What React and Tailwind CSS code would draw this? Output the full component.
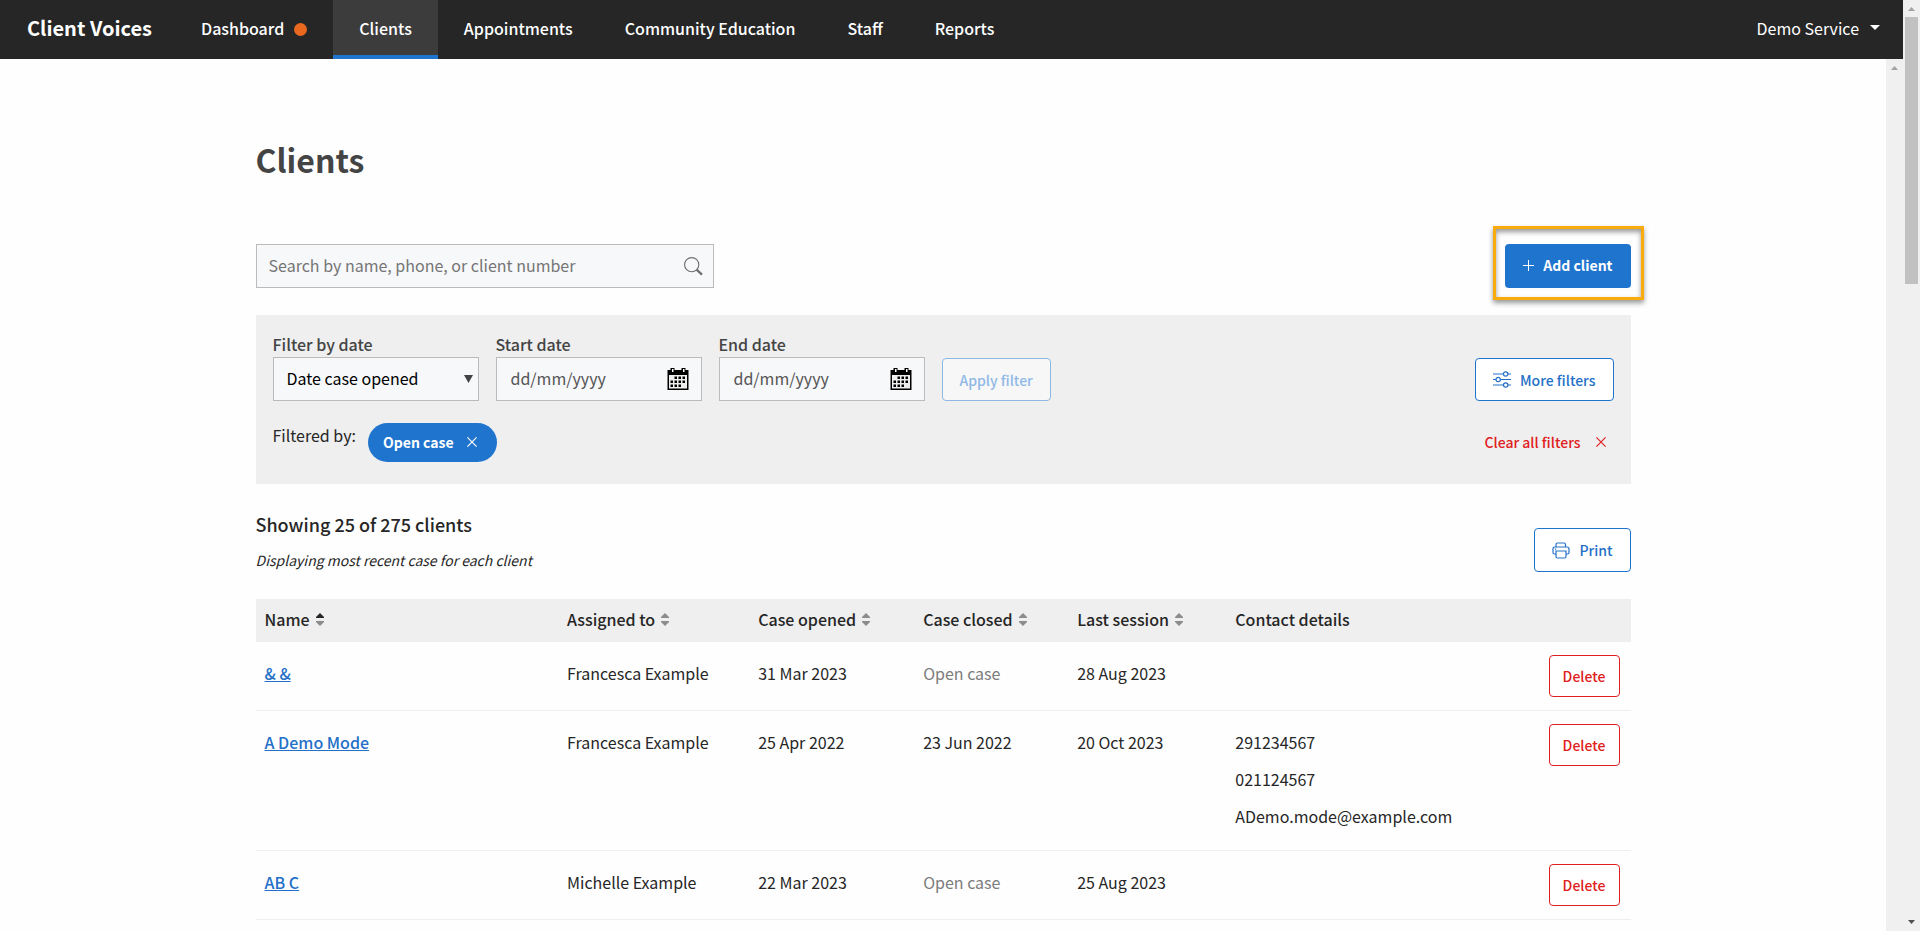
import React, { useState } from 'react';

const navItems = [
  { label: 'Dashboard', alert: true },
  { label: 'Clients' },
  { label: 'Appointments' },
  { label: 'Community Education' },
  { label: 'Staff' },
  { label: 'Reports' },
];

const columns = [
  { label: 'Name', sort: 'asc', width: 'w-[22%]' },
  { label: 'Assigned to', sort: 'none', width: 'w-[13.9%]' },
  { label: 'Case opened', sort: 'none', width: 'w-[12%]' },
  { label: 'Case closed', sort: 'none', width: 'w-[11.2%]' },
  { label: 'Last session', sort: 'none', width: 'w-[11.5%]' },
  { label: 'Contact details', width: 'w-[19%]' },
];

const clients = [
  { name: '& &', assigned: 'Francesca Example', opened: '31 Mar 2023', closed: null, last: '28 Aug 2023', contact: [] },
  {
    name: 'A Demo Mode',
    assigned: 'Francesca Example',
    opened: '25 Apr 2022',
    closed: '23 Jun 2022',
    last: '20 Oct 2023',
    contact: ['291234567', '021124567', 'ADemo.mode@example.com'],
  },
  { name: 'AB C', assigned: 'Michelle Example', opened: '22 Mar 2023', closed: null, last: '25 Aug 2023', contact: [] },
];

const SortIcon = ({ sort }) => (
  <svg width="8" height="13" viewBox="0 0 8 13" aria-hidden="true">
    <path d="M4 0 L8 4 V5 H0 V4 Z" fill={sort === 'asc' ? '#262626' : '#8c8c8c'} />
    <path d="M0 8 H8 V9 L4 13 L0 9 Z" fill="#8c8c8c" />
  </svg>
);

const CloseIcon = () => (
  <svg width="10" height="10" viewBox="0 0 10 10" fill="none" stroke="currentColor" strokeWidth="1.2" aria-hidden="true">
    <path d="M0.4 0.4 L9.6 9.6 M9.6 0.4 L0.4 9.6" />
  </svg>
);

const SearchIcon = () => (
  <svg width="19" height="19" viewBox="0 0 19 19" fill="none" stroke="#6e6e6e" aria-hidden="true">
    <circle cx="7.7" cy="7.7" r="7.1" strokeWidth="1.1" />
    <path d="M12.6 12.6 L18 17.6" strokeWidth="2.2" />
  </svg>
);

const CalendarIcon = () => (
  <svg width="22" height="22" viewBox="0 0 22 22" aria-hidden="true">
    <path d="M0.5 2 H21.5 V22 H0.5 Z" fill="#000" />
    <path d="M2 7 H20 V20.5 H2 Z" fill="#eee" />
    <path d="M3.5 0 H7.5 V5 H3.5 Z M14.5 0 H18.5 V5 H14.5 Z" fill="#000" />
    <path d="M5 1 H6.5 V4 H5 Z M16 1 H17.5 V4 H16 Z" fill="#fff" />
    <path
      d="M7.5 8.5h2.5v2.5h-2.5z M11.5 8.5h2.5v2.5h-2.5z M15.5 8.5h2.5v2.5h-2.5z M3.5 12.5h2.5v2.5h-2.5z M7.5 12.5h2.5v2.5h-2.5z M11.5 12.5h2.5v2.5h-2.5z M15.5 12.5h2.5v2.5h-2.5z M3.5 16.5h2.5v2.5h-2.5z M7.5 16.5h2.5v2.5h-2.5z M11.5 16.5h2.5v2.5h-2.5z"
      fill="#000"
    />
  </svg>
);

const SlidersIcon = () => (
  <svg width="18" height="17" viewBox="0 0 18 17" fill="none" stroke="currentColor" strokeWidth="1.2" aria-hidden="true">
    <path d="M0 3 H10.5 M15 3 H18 M0 8.5 H3 M7.5 8.5 H18 M0 14 H10.5 M15 14 H18" />
    <circle cx="12.7" cy="3" r="2.2" />
    <circle cx="5.2" cy="8.5" r="2.2" />
    <circle cx="12.7" cy="14" r="2.2" />
  </svg>
);

const PrintIcon = () => (
  <svg width="18" height="17" viewBox="0 0 18 17" fill="none" stroke="currentColor" strokeWidth="1.2" aria-hidden="true">
    <path d="M4 5 V2.5 Q4 1 5.5 1 H12 Q13.5 1 13.5 2.5 V5" />
    <path d="M4 12 H2.5 Q1 12 1 10.5 V7 Q1 5 3 5 H15 Q17 5 17 7 V10.5 Q17 12 15.5 12 H14" />
    <path d="M4 9 H14 V14.5 Q14 16 12.5 16 H5.5 Q4 16 4 14.5 Z" />
    <path d="M3 7.2 H4.2" />
  </svg>
);

const DateField = ({ id, label }) => (
  <div className="w-[206px]">
    <label htmlFor={id} className="block pb-0.5 leading-[22px] font-medium text-[#444]">{label}</label>
    <div className="flex h-11 items-center border border-[#bbb] bg-[#f7f8fa] pr-3 pl-[14px]">
      <input
        id={id}
        type="text"
        placeholder="dd/mm/yyyy"
        className="min-w-0 flex-1 bg-transparent pb-0.5 outline-none placeholder:text-[#555]"
      />
      <button type="button" aria-label={`Choose ${label.toLowerCase()}`}>
        <CalendarIcon />
      </button>
    </div>
  </div>
);

const ScrollArrow = ({ down }) => (
  <svg width="7" height="4" viewBox="0 0 7 4" className="shrink-0" aria-hidden="true">
    {down ? <path d="M0 0 H7 L3.5 4 Z" fill="#505050" /> : <path d="M0 4 H7 L3.5 0 Z" fill="#a3a3a3" />}
  </svg>
);

const App = () => {
  const [active, setActive] = useState('Clients');
  const [search, setSearch] = useState('');

  return (
    <div className="flex h-screen overflow-hidden bg-[#fefefe] font-['Noto_Sans_CJK_SC','Noto_Sans',sans-serif] text-base text-[#262626]">
      <div className="flex min-w-0 flex-1 flex-col">
        <header className="flex h-[59px] shrink-0 bg-[#262626] text-white">
          <a href="#home" className="flex items-center pr-[23px] pb-1 pl-[27px] text-xl leading-6 font-bold">Client Voices</a>
          <nav className="flex flex-1">
            {navItems.map((item) => (
              <a
                key={item.label}
                href={`#${item.label}`}
                onClick={() => setActive(item.label)}
                className={`flex items-center gap-[10px] border-b-4 px-[26px] font-medium ${
                  active === item.label ? 'border-b-[#1f74cd] bg-[#3c3c3c]' : 'border-b-transparent'
                }`}
              >
                {item.label}
                {item.alert && <span className="mt-1 h-[13px] w-[13px] rounded-full bg-[#e9671f]" />}
              </a>
            ))}
          </nav>
          <button type="button" className="flex items-center gap-[11px] pr-[23px] pb-1 pl-6">
            Demo Service
            <svg width="10" height="5" viewBox="0 0 10 5" aria-hidden="true">
              <path d="M0 0 H10 L5 5 Z" fill="#fff" />
            </svg>
          </button>
        </header>

        <div className="flex min-h-0 flex-1">
          <main className="min-w-0 flex-1 overflow-hidden">
            <div className="mx-auto w-full max-w-[1375px] pt-[79px]">
              <h1 className="text-[32px] leading-[42px] font-bold text-[#444]">Clients</h1>

              <div className="mt-16 flex items-center justify-between">
                <div className="flex h-11 w-1/3 items-center border border-[#bbb] bg-[#f7f8fa] pr-[10px] pl-3">
                  <input
                    type="text"
                    aria-label="Search clients"
                    placeholder="Search by name, phone, or client number"
                    value={search}
                    onChange={(e) => setSearch(e.target.value)}
                    className="min-w-0 flex-1 bg-transparent pb-0.5 outline-none placeholder:text-[#757575]"
                  />
                  <button type="button" aria-label="Search">
                    <SearchIcon />
                  </button>
                </div>
                <div className="relative">
                  <button type="button" className="flex h-11 items-center gap-[9px] rounded bg-[#1f74cd] px-[18px] pb-0.5 text-sm font-bold text-white">
                    <svg width="11" height="11" viewBox="0 0 11 11" fill="none" stroke="currentColor" aria-hidden="true">
                      <path d="M5.5 0 V11 M0 5.5 H11" />
                    </svg>
                    Add client
                  </button>
                  <div className="pointer-events-none absolute -top-[18px] -right-[13px] -bottom-3 -left-3 border-3 border-[#f9ab0b] shadow-[0_3px_5px_rgba(0,0,0,0.4),inset_0_3px_5px_rgba(0,0,0,0.4)]" />
                </div>
              </div>

              <section className="mt-[27px] h-[169px] bg-[#efefef] px-[17px] pt-[18px]">
                <div className="flex items-end gap-[17px]">
                  <div className="w-[206px]">
                    <label htmlFor="filter-date" className="block pb-0.5 leading-[22px] font-medium text-[#444]">Filter by date</label>
                    <div className="relative">
                      <select id="filter-date" className="h-11 w-full appearance-none border border-[#bbb] bg-[#f7f8fa] pb-0.5 pl-[13px] text-black">
                        <option>Date case opened</option>
                        <option>Date case closed</option>
                      </select>
                      <svg width="9" height="8" viewBox="0 0 9 8" className="pointer-events-none absolute top-[18px] right-[6px]" aria-hidden="true">
                        <path d="M0 0 H9 L4.5 8 Z" fill="#444" />
                      </svg>
                    </div>
                  </div>
                  <DateField id="start-date" label="Start date" />
                  <DateField id="end-date" label="End date" />
                  <button type="button" className="h-[43px] rounded border border-[#8db7e4] bg-[#f7f7f7] px-[17px] text-sm font-medium text-[#8fb9e6]">
                    Apply filter
                  </button>
                  <button type="button" className="ml-auto flex h-[43px] items-center gap-[9px] rounded border border-[#1f74cd] bg-white px-[17px] text-sm font-medium text-[#2470c8]">
                    <SlidersIcon />
                    More filters
                  </button>
                </div>
                <div className="mt-[22px] flex">
                  <span className="mr-3 leading-6">Filtered by:</span>
                  <button type="button" className="flex h-[39px] items-center gap-[13px] rounded-full bg-[#1f74cd] pr-5 pb-0.5 pl-[15px] text-sm font-bold text-white">
                    Open case
                    <CloseIcon />
                  </button>
                  <button type="button" className="ml-auto flex h-[39px] items-center gap-[15px] pr-2 pb-0.5 text-sm font-medium text-[#e02020]">
                    Clear all filters
                    <CloseIcon />
                  </button>
                </div>
              </section>

              <div className="mt-7 flex items-end justify-between">
                <div>
                  <h2 className="text-lg leading-6 font-medium">Showing 25 of 275 clients</h2>
                  <p className="mt-3 text-sm leading-6 italic">Displaying most recent case for each client</p>
                </div>
                <button type="button" className="flex h-11 items-center gap-[9px] rounded border border-[#1f74cd] bg-white px-[17px] text-sm font-medium text-[#2470c8]">
                  <PrintIcon />
                  Print
                </button>
              </div>

              <table className="mt-[27px] w-full table-fixed border-collapse text-left">
                <thead>
                  <tr className="h-[43px] bg-[#efefef]">
                    {columns.map((col) => (
                      <th key={col.label} className={`pb-1 pl-[9px] font-medium ${col.width}`}>
                        <span className="flex items-center gap-[6px] leading-6">
                          {col.label}
                          {col.sort && (
                            <button type="button" aria-label={`Sort by ${col.label}`} className="mt-0.5">
                              <SortIcon sort={col.sort} />
                            </button>
                          )}
                        </span>
                      </th>
                    ))}
                    <th aria-label="Actions" />
                  </tr>
                </thead>
                <tbody>
                  {clients.map((client) => (
                    <tr key={client.name} className="border-b border-[#efefef] align-top leading-6">
                      <td className="pt-[19px] pl-[9px]">
                        <a href="#client" className="font-medium text-[#2470c8] underline">{client.name}</a>
                      </td>
                      <td className="pt-[19px] pl-[9px]">{client.assigned}</td>
                      <td className="pt-[19px] pl-[9px]">{client.opened}</td>
                      <td className="pt-[19px] pl-[9px]">{client.closed || <span className="text-[#7c7c7c]">Open case</span>}</td>
                      <td className="pt-[19px] pl-[9px]">{client.last}</td>
                      <td className="pt-[19px] pb-[9px] pl-[9px]">
                        {client.contact.map((line) => (
                          <p key={line} className="mb-[13px]">{line}</p>
                        ))}
                      </td>
                      <td className="py-[13px] pr-[11px] text-right">
                        <button type="button" className="h-[42px] rounded border border-[#e02020] bg-white px-[13px] text-sm font-medium text-[#e02020]">
                          Delete
                        </button>
                      </td>
                    </tr>
                  ))}
                </tbody>
              </table>
            </div>
          </main>
          <div className="flex w-[17px] shrink-0 flex-col items-center bg-[#f0f0f0] pt-[7px]">
            <ScrollArrow />
          </div>
        </div>
      </div>

      <div className="flex w-[17px] shrink-0 flex-col items-center bg-[#f0f0f0] pt-[7px] pb-[7px]">
        <ScrollArrow />
        <div className="mt-[6px] h-[267px] w-[13px] bg-[#c1c1c1]" />
        <div className="mt-auto flex">
          <ScrollArrow down />
        </div>
      </div>
    </div>
  );
};

export default App;
